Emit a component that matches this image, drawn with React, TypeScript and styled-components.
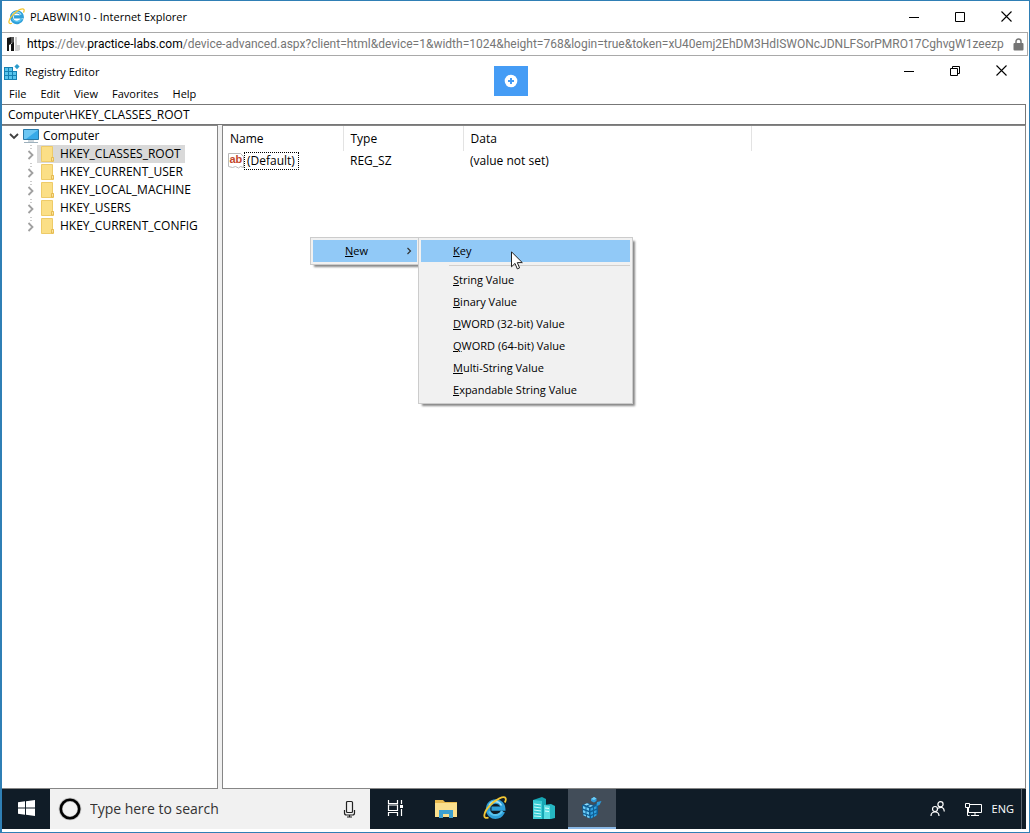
import React from "react";
import styled, { createGlobalStyle } from "styled-components";

const GlobalStyle = createGlobalStyle`
  *, *::before, *::after { box-sizing: border-box; }
  body {
    margin: 0;
    background: #fff;
    color: #000;
    font: 12px/16px "Open Sans", "Noto Sans", sans-serif;
  }
  button, input { font: inherit; color: inherit; }
  button { padding: 0; border: 0; background: none; }
  svg { display: block; flex: none; }
`;

/* ---------- browser window ---------- */

const BrowserWindow = styled.div`
  display: flex;
  flex-direction: column;
  min-height: 100vh;
  border: 1px solid #2f7fb5;
  border-left-width: 2px;
  background: #fff;
`;

const TitleBar = styled.header`
  display: flex;
  align-items: center;
  height: 31px;
`;

const AppTitleBar = styled(TitleBar)`
  height: 29px;
  padding: 0 2px;
`;

const Title = styled.h1`
  flex: 1;
  margin: 0 0 0 5px;
  font-size: 11px;
  font-weight: 400;
`;

const AppTitle = styled.div`
  display: flex;
  align-items: center;
  flex: 1;
  padding-top: 3px;
`;

const BrowserIcon = styled.span`
  margin-left: 6px;
`;

const WindowButton = styled.button`
  display: grid;
  place-items: center;
  width: 46px;
  height: 28px;
`;

const AddressBar = styled.div`
  display: flex;
  align-items: center;
  gap: 7px;
  height: 24px;
  margin-right: 1px;
  padding: 0 3px 0 4px;
  border: 1px solid #a9a9a9;
  border-left: 0;
`;

const Url = styled.div`
  flex: 1;
  min-width: 0;
  overflow: hidden;
  white-space: nowrap;
  font-family: Roboto, sans-serif;
  color: #767676;

  b { font-weight: 400; color: #000; }
`;

/* ---------- remote desktop ---------- */

const Desktop = styled.main`
  position: relative;
  flex: 1;
  display: flex;
  flex-direction: column;
  margin: 0 3px 3px 0;
`;

const ConnectButton = styled.button`
  position: absolute;
  top: 10px;
  left: 492px;
  display: grid;
  place-items: center;
  width: 34px;
  height: 30px;
  background: #459cf5;
`;

const MenuBar = styled.nav`
  display: flex;
  gap: 14px;
  height: 18px;
  padding-left: 7px;
`;

const MenuBarItem = styled.button`
  font-size: 11px;
  line-height: 16px;
`;

const KeyPath = styled.input`
  width: 100%;
  height: 21px;
  margin: 1px 0 0;
  padding: 0 6px;
  border: 1px solid #777;
  border-left-width: 0;
  font-size: 12px;
  outline: 0;
`;

const Panes = styled.div`
  flex: 1;
  display: grid;
  grid-template-columns: 216px minmax(0, 1fr);
  gap: 4px;
  background: #f0f0f0;
`;

const Pane = styled.section`
  position: relative;
  border: 1px solid #868686;
  background: #fff;
`;

const TreePane = styled(Pane)`
  border-left: 0;
`;

/* ---------- key tree ---------- */

const TreeRoot = styled.div`
  display: flex;
  align-items: center;
  gap: 4px;
  height: 18px;
  padding: 2px 0 0 7px;
`;

const TreeList = styled.ul`
  margin: 1px 0 0;
  padding: 0 0 0 24px;
  list-style: none;
`;

const TreeItem = styled.li`
  display: flex;
  align-items: center;
  gap: 2px;
  height: 18px;
`;

const TreeKey = styled.button<{ $selected: boolean }>`
  display: flex;
  align-items: center;
  gap: 6px;
  height: 18px;
  padding: 0 4px;
  background: ${(p) => (p.$selected ? "#d9d9d9" : "transparent")};
`;

/* ---------- value table ---------- */

const ValueTable = styled.table`
  border-collapse: collapse;
  table-layout: fixed;
  width: 529px;

  th, td { padding: 0 7px; text-align: left; font-weight: 400; }
  th { height: 25px; border-right: 1px solid #e3e3e3; }
  td { height: 20px; }
  td:first-child { padding-left: 5px; }
`;

const ValueName = styled.span`
  display: flex;
  align-items: center;
`;

const FocusLabel = styled.span`
  padding: 0 3px 0 2px;
  border: 1px dotted #000;
`;

/* ---------- context menu ---------- */

const Menu = styled.div<{ $top: number; $left: number; $width: number }>`
  position: absolute;
  top: ${(p) => p.$top}px;
  left: ${(p) => p.$left}px;
  width: ${(p) => p.$width}px;
  padding: 2px;
  border: 1px solid #ccc;
  background: #f1f1f1;
  box-shadow: 3px 3px 2px -1px #888;
  font-size: 11px;
`;

const MenuItem = styled.button<{ $active?: boolean }>`
  display: flex;
  align-items: center;
  justify-content: space-between;
  width: 100%;
  height: 22px;
  padding: 0 4px 0 32px;
  background: ${(p) => (p.$active ? "#91c9f7" : "transparent")};
`;

const MenuRule = styled.hr`
  height: 1px;
  margin: 3px 0 3px 28px;
  border: 0;
  background: #d2cfcc;
`;

const Pointer = styled.svg`
  position: absolute;
  top: 125px;
  left: 288px;
`;

/* ---------- taskbar ---------- */

const Taskbar = styled.footer`
  display: flex;
  height: 40px;
  background: #101c27;
  color: #fff;
`;

const TaskButton = styled.button<{ $active?: boolean; $width?: number }>`
  display: grid;
  place-items: center;
  width: ${(p) => p.$width ?? 49}px;
  background: ${(p) => (p.$active ? "#424d59" : "transparent")};
  border-bottom: 2px solid ${(p) => (p.$active ? "#8ab8e6" : "transparent")};
`;

const SearchBox = styled.label`
  display: flex;
  align-items: center;
  gap: 8px;
  width: 320px;
  padding: 0 14px 0 8px;
  background: #f1f1f1;
  color: #222;
`;

const SearchInput = styled.input`
  flex: 1;
  min-width: 0;
  padding: 0;
  border: 0;
  outline: 0;
  background: none;
  font-size: 14px;
  line-height: 20px;

  &::placeholder { color: #333; opacity: 1; }
`;

const Tray = styled.div`
  display: flex;
  align-items: center;
  gap: 10px;
  margin-left: auto;
  padding-right: 7px;
  font-size: 11px;
`;

const TrayButton = styled.button`
  display: block;
`;

const PeopleButton = styled(TrayButton)`
  margin-right: 10px;
`;

const ShowDesktop = styled.button`
  width: 5px;
  height: 40px;
  border-left: 1px solid #5a646e;
`;

/* ---------- icons ---------- */

const ExplorerIcon = ({ size }: { size: number }) => (
  <svg width={size} height={size} viewBox="0 0 24 24" fill="none">
    <path d="M19.800 15.600A7.600 7.600 0 1 1 20.200 12.600H8.500" stroke="#2f9fd8" strokeWidth="4.400" />
    <path d="M19.200 15A7.600 7.600 0 0 1 6 15.500" stroke="#59c2ee" strokeWidth="2" />
    <path d="M6 9.500A7 7 0 0 1 18.500 9.500" stroke="#a5e2f8" strokeWidth="1.600" />
    <path
      d="M5.500 21.500C-1 24 .5 16 7 9.500C13 3 21-.5 22.600 2.200C23.200 3.300 22.600 5 21.800 6.500"
      stroke="#f3c735"
      strokeWidth="1.800"
    />
  </svg>
);

const SiteIcon = () => (
  <svg width="14" height="16" viewBox="0 0 14 16">
    <path d="M1 2l4-1v7l-2 1v6H1z" fill="#161616" />
    <path d="M5 1h3v6H5z" fill="#555" />
    <path d="M5 8l3-2v9H5z" fill="#111" />
    <path d="M9 1h2v8h3v5l-2 1H9z" fill="#cfcfcf" />
  </svg>
);

const LockIcon = () => (
  <svg width="11" height="13" viewBox="0 0 11 13">
    <path d="M3 6V3.500a2.500 2.500 0 0 1 5 0V6" fill="none" stroke="#757575" strokeWidth="1.500" />
    <rect x="0.500" y="5" width="10" height="7.500" rx="1" fill="#757575" />
  </svg>
);

const RegistryIcon = () => (
  <svg width="16" height="16" viewBox="0 0 16 16">
    <path d="M0 3h9v4h4v9H0z" fill="#1580b2" />
    <path d="M1 4h3v3H1zM5 4h3v3H5zM1 8h3v3H1zM5 8h3v3H5zM9 8h3v3H9zM1 12h3v3H1zM5 12h3v3H5zM9 12h3v3H9z" fill="#58c4ec" />
    <path d="M13 0l2.600 2.600L13 5.200l-2.600-2.600z" fill="#2b9ccc" />
  </svg>
);

const MinimizeGlyph = () => (
  <svg width="10" height="10" viewBox="0 0 10 10"><path d="M0 5.500h10" stroke="#000" /></svg>
);

const MaximizeGlyph = () => (
  <svg width="10" height="10" viewBox="0 0 10 10"><path d="M.5.5h9v9h-9z" fill="none" stroke="#000" /></svg>
);

const RestoreGlyph = () => (
  <svg width="10" height="10" viewBox="0 0 10 10">
    <path d="M.5 2.500h7v7h-7zM2.500 2.500v-2h7v7h-2" fill="none" stroke="#000" />
  </svg>
);

const CloseGlyph = () => (
  <svg width="11" height="11" viewBox="0 0 11 11"><path d="M.5.5l10 10M10.500.5l-10 10" stroke="#000" strokeWidth="1.100" /></svg>
);

const PlusCircle = () => (
  <svg width="14" height="14" viewBox="0 0 14 14">
    <circle cx="7" cy="7" r="6.300" fill="#fff" />
    <path d="M7 4v6M4 7h6" stroke="#459cf5" strokeWidth="2" />
  </svg>
);

const SubmenuArrow = () => (
  <svg width="8" height="8" viewBox="0 0 8 8">
    <path d="M2.500 1l3 3-3 3" fill="none" stroke="#333" strokeWidth="1.200" />
  </svg>
);

const BranchArrow = () => (
  <svg width="9" height="18" viewBox="0 0 9 18">
    <path d="M5 0v1M5 3v1" stroke="#999" />
    <path d="M2.500 6l4 4-4 4" fill="none" stroke="#a0a0a0" strokeWidth="1.800" />
  </svg>
);

const ChevronDown = () => (
  <svg width="10" height="10" viewBox="0 0 10 10">
    <path d="M1 3l4 4 4-4" fill="none" stroke="#404040" strokeWidth="1.800" />
  </svg>
);

const MonitorIcon = () => (
  <svg width="16" height="16" viewBox="0 0 16 16">
    <path d="M.5 1.500h15v10H.5z" fill="#36a9e8" stroke="#2879a8" />
    <path d="M1 2h14L3 11H1z" fill="#6cc7f4" />
    <path d="M5 13h6M1 14.500h14" stroke="#9db0bc" />
  </svg>
);

const KeyFolderIcon = () => (
  <svg width="13" height="16" viewBox="0 0 13 16">
    <path d="M.5.5h11v11h1v4H.5z" fill="#fbdf86" stroke="#eecb68" />
    <path d="M10.500 11.500h1.800v3.500h-1.800z" fill="#ffeeb0" stroke="#e0b040" strokeWidth=".8" />
  </svg>
);

const StringIcon = () => (
  <svg width="16" height="16" viewBox="0 0 16 16">
    <path d="M.5.5h12l3 3v11l-3-1-2 1.500-3-1.500-3 1-4-1z" fill="#fff" stroke="#b9b9b9" />
    <text x="1.500" y="10" fontFamily="Liberation Sans, sans-serif" fontSize="11" fontWeight="700" fill="#c2462a">ab</text>
  </svg>
);

const WindowsLogo = () => (
  <svg width="17" height="16" viewBox="0 0 17 16" fill="#fff">
    <path d="M0 2.300l7-1v6.200H0zM8 1.200L17 0v7.500H8zM0 8.500h7v6.200l-7-1zM8 8.500h9V16l-9-1.200z" />
  </svg>
);

const CortanaRing = () => (
  <svg width="24" height="24" viewBox="0 0 24 24">
    <circle cx="12" cy="12" r="9.300" fill="none" stroke="#8a8a8a" strokeWidth="4" opacity=".5" />
    <circle cx="12" cy="12" r="9.200" fill="none" stroke="#000" strokeWidth="2.600" />
  </svg>
);

const Microphone = () => (
  <svg width="13" height="18" viewBox="0 0 13 18" fill="none" stroke="#222" strokeWidth="1.200">
    <rect x="3.500" y="1.500" width="6" height="11" rx="1" />
    <path d="M1.500 10v3q0 2 2 2h6q2 0 2-2v-3M6.500 15v2M4 17h5" />
  </svg>
);

const TaskViewIcon = () => (
  <svg width="17" height="16" viewBox="0 0 17 16" fill="none" stroke="#fff" strokeWidth="1.200">
    <path d="M1.500 0v3.500h9V0M1.500 16v-3.500h9V16M1.500 5v5.500h9V5zM14.500 0v4M14.500 9v7" />
    <path d="M13 5h3v3h-3z" fill="#fff" stroke="none" />
  </svg>
);

const FileExplorerIcon = () => (
  <svg width="22" height="19" viewBox="0 0 22 19">
    <path d="M0 1h8l2 2h12v15H0z" fill="#e8b94e" />
    <path d="M0 4h22v14H0z" fill="#fbdf8d" />
    <path d="M4 19v-8h14v8h-4v-4H8v4z" fill="#3c9fd0" />
  </svg>
);

const ServerIcon = () => (
  <svg width="22" height="22" viewBox="0 0 22 22">
    <path d="M0 3l9-3 4 2v20H0z" fill="#16a6b4" />
    <path d="M0 3l9 1v18H0z" fill="#3accd4" />
    <path d="M1 7l7 1M1 10l7 1M1 13l7 1M1 16l7 1M1 19l7 .5" stroke="#c8fbfb" />
    <path d="M11 8l7-1 4 2v12l-4 1h-7z" fill="#25b6c2" />
    <path d="M11 8l6 1v13h-6z" fill="#5bdde2" />
    <path d="M12 11l4 .5M12 14l4 .5" stroke="#e0ffff" />
  </svg>
);

const RegistryCubeIcon = () => (
  <svg width="20" height="22" viewBox="0 0 20 22">
    <path d="M0 8l6-2 5 2 5-2v11l-7 5-8-4z" fill="#0f5f95" />
    <path d="M1 9l2.500 1v2.500L1 11.500zM4.500 10.300l2.500 1v2.500l-2.500-1zM1 13l2.500 1v2.500L1 15.500zM4.500 14.300l2.500 1v2.500l-2.500-1zM1.500 17l2.500 1v1.500l-2.500-1zM5 18.300l2.500 1v2l-2.500-1z" fill="#6fcdf7" />
    <path d="M8.500 11.500l2.500-1V13l-2.500 1zM12 10l2.500-1v2.500l-2.500 1zM8.500 15.500l2.500-1V17l-2.500 1zM12 14l2.500-1v2.500l-2.500 1zM9 19.300l2-1v2l-2 1zM12 17.800l2.500-1.300v2L12 20z" fill="#2f9fdd" />
    <path d="M2 7.500l3-1.300 2.500 1L4.500 8.500zM6 9l3-1 2 .7-3 1.300z" fill="#8fdcfb" />
    <path d="M9 2l3-2 2.500 1.500v2.500L12 5.500 9 4zM15 5l4.500-1-2 4-3 1z" fill="#2c9bdb" />
    <path d="M9 2l3 1 2.500-1.500L12 0z" fill="#6fcdf7" />
  </svg>
);

const PeopleIcon = () => (
  <svg width="15" height="16" viewBox="0 0 15 16" fill="none" stroke="#fff" strokeWidth="1.200">
    <circle cx="5" cy="8" r="2.500" />
    <path d="M1 15q0-4 4-4t4 4" />
    <circle cx="10.500" cy="3.300" r="2.600" />
    <path d="M8 7.200q6-2.500 6.300 3.300" />
  </svg>
);

const NetworkIcon = () => (
  <svg width="17" height="15" viewBox="0 0 17 15" fill="none" stroke="#fff">
    <path d="M5 2.500h11.500v8H3.500V6M10 10.500v3M6 13.500h8M.5 1.500h4v4h-4zM2.500 5.500v8h2" />
  </svg>
);

/* ---------- content ---------- */

const menuNames = ["File", "Edit", "View", "Favorites", "Help"];

const keys = [
  "HKEY_CLASSES_ROOT",
  "HKEY_CURRENT_USER",
  "HKEY_LOCAL_MACHINE",
  "HKEY_USERS",
  "HKEY_CURRENT_CONFIG",
];

const newValues = [
  "String Value",
  "Binary Value",
  "DWORD (32-bit) Value",
  "QWORD (64-bit) Value",
  "Multi-String Value",
  "Expandable String Value",
];

const Mnemonic = ({ text }: { text: string }) => (
  <span>
    <u>{text[0]}</u>
    {text.slice(1)}
  </span>
);

const WindowControls = ({ restored }: { restored?: boolean }) => (
  <>
    <WindowButton aria-label="Minimize"><MinimizeGlyph /></WindowButton>
    <WindowButton aria-label={restored ? "Restore" : "Maximize"}>
      {restored ? <RestoreGlyph /> : <MaximizeGlyph />}
    </WindowButton>
    <WindowButton aria-label="Close"><CloseGlyph /></WindowButton>
  </>
);

export default function App() {
  return (
    <>
      <GlobalStyle />
      <BrowserWindow>
        <TitleBar>
          <BrowserIcon><ExplorerIcon size={17} /></BrowserIcon>
          <Title>PLABWIN10 - Internet Explorer</Title>
          <WindowControls />
        </TitleBar>
        <AddressBar>
          <SiteIcon />
          <Url>
            <b>https</b>://dev.<b>practice-labs.com</b>
            /device-advanced.aspx?client=html&amp;device=1&amp;width=1024&amp;height=768&amp;login=true&amp;token=xU40emj2EhDM3HdISWONcJDNLFSorPMRO17CghvgW1zeezp
          </Url>
          <LockIcon />
        </AddressBar>

        <Desktop>
          <AppTitleBar>
            <AppTitle>
              <RegistryIcon />
              <Title as="h2">Registry Editor</Title>
            </AppTitle>
            <WindowControls restored />
          </AppTitleBar>
          <ConnectButton aria-label="Connection options"><PlusCircle /></ConnectButton>
          <MenuBar>
            {menuNames.map((name) => (
              <MenuBarItem key={name}>{name}</MenuBarItem>
            ))}
          </MenuBar>
          <KeyPath aria-label="Key path" defaultValue="Computer\HKEY_CLASSES_ROOT" />

          <Panes>
            <TreePane>
              <TreeRoot>
                <ChevronDown />
                <MonitorIcon />
                <span>Computer</span>
              </TreeRoot>
              <TreeList>
                {keys.map((name, i) => (
                  <TreeItem key={name}>
                    <BranchArrow />
                    <TreeKey $selected={i === 0}>
                      <KeyFolderIcon />
                      {name}
                    </TreeKey>
                  </TreeItem>
                ))}
              </TreeList>
            </TreePane>

            <Pane>
              <ValueTable>
                <colgroup>
                  <col style={{ width: 120 }} />
                  <col style={{ width: 120 }} />
                  <col />
                </colgroup>
                <thead>
                  <tr><th>Name</th><th>Type</th><th>Data</th></tr>
                </thead>
                <tbody>
                  <tr>
                    <td><ValueName><StringIcon /><FocusLabel>(Default)</FocusLabel></ValueName></td>
                    <td>REG_SZ</td>
                    <td>(value not set)</td>
                  </tr>
                </tbody>
              </ValueTable>

              <Menu $top={111} $left={87} $width={110}>
                <MenuItem $active>
                  <Mnemonic text="New" />
                  <SubmenuArrow />
                </MenuItem>
              </Menu>
              <Menu $top={111} $left={195} $width={215}>
                <MenuItem $active><Mnemonic text="Key" /></MenuItem>
                <MenuRule />
                {newValues.map((name) => (
                  <MenuItem key={name}><Mnemonic text={name} /></MenuItem>
                ))}
              </Menu>
              <Pointer width="12" height="19" viewBox="0 0 12 19">
                <path d="M.5.8v15l3.500-3.400 2.300 5.500 2.300-1-2.300-5.300h5z" fill="#fff" stroke="#222" />
              </Pointer>
            </Pane>
          </Panes>

          <Taskbar>
            <TaskButton aria-label="Start" $width={48}><WindowsLogo /></TaskButton>
            <SearchBox>
              <CortanaRing />
              <SearchInput aria-label="Search" placeholder="Type here to search" />
              <Microphone />
            </SearchBox>
            <TaskButton aria-label="Task view" $width={51}><TaskViewIcon /></TaskButton>
            <TaskButton aria-label="File Explorer"><FileExplorerIcon /></TaskButton>
            <TaskButton aria-label="Internet Explorer"><ExplorerIcon size={24} /></TaskButton>
            <TaskButton aria-label="Server Manager"><ServerIcon /></TaskButton>
            <TaskButton aria-label="Registry Editor" $width={48} $active><RegistryCubeIcon /></TaskButton>
            <Tray>
              <PeopleButton aria-label="People"><PeopleIcon /></PeopleButton>
              <TrayButton aria-label="Network"><NetworkIcon /></TrayButton>
              <TrayButton>ENG</TrayButton>
            </Tray>
            <ShowDesktop aria-label="Show desktop" />
          </Taskbar>
        </Desktop>
      </BrowserWindow>
    </>
  );
}
